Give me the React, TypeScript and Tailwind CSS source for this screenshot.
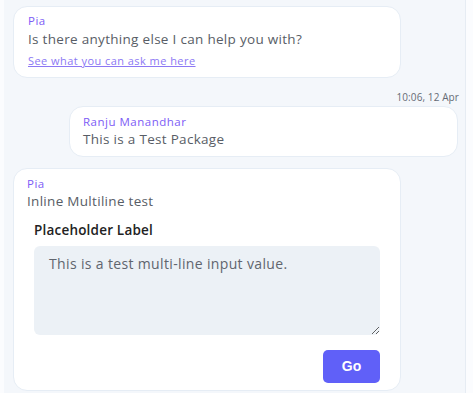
export default function App() {
  const font = { fontFamily: '"Open Sans", "Noto Sans", sans-serif' };
  return (
    <div className="w-[473px] h-[393px] bg-[#fbfcfe] overflow-hidden" style={font}>
      <div className="ml-[4px] w-[462px] h-full bg-[#f4f7fb] border-r border-[#e6ecf3] pl-[9px] pt-[6px] flex flex-col">
        <div className="w-[388px] h-[72px] bg-white border border-[#e6edf5] rounded-[14px] pl-[14px] pt-[7px]">
          <div className="text-[11.5px] leading-[14px] tracking-[0.5px] text-[#7d5cf6]">Pia</div>
          <div className="text-[13.5px] leading-[18px] tracking-[0.3px] text-[#585d66] mt-[2px]">
            Is there anything else I can help you with?
          </div>
          <a className="block mt-[6px] text-[11px] leading-[14px] tracking-[0.45px] text-[#8c78f4] underline">
            See what you can ask me here
          </a>
        </div>

        <div className="w-[449px] text-right text-[10px] leading-[12px] tracking-[0.1px] text-[#666b75] mt-[13px] pr-[3px]">
          10:06, 12 Apr
        </div>

        <div className="ml-[56px] w-[389px] h-[51px] bg-white border border-[#e6edf5] rounded-[14px] pl-[13px] pt-[8px] mt-[3px]">
          <div className="text-[11.5px] leading-[14px] tracking-[0.5px] text-[#7d5cf6]">Ranju Manandhar</div>
          <div className="text-[13.5px] leading-[18px] tracking-[0.3px] text-[#585d66] mt-[1px]">This is a Test Package</div>
        </div>

        <div className="w-[388px] h-[223px] bg-white border border-[#e6edf5] rounded-[14px] pl-[13px] pt-[8px] mt-[11px]">
          <div className="text-[11.5px] leading-[14px] tracking-[0.5px] text-[#7d5cf6]">Pia</div>
          <div className="text-[13.5px] leading-[18px] tracking-[0.3px] text-[#585d66] mt-[1px]">Inline Multiline test</div>
          <div className="ml-[7px] mt-[11px] w-[346px]">
            <div className="text-[13.5px] leading-[18px] tracking-[0.2px] font-semibold text-[#222]">Placeholder Label</div>
            <textarea
              className="block mt-[7px] w-[346px] h-[89px] bg-[#ecf1f6] rounded-[6px] px-[15px] pt-[9px] text-[14px] leading-[18px] tracking-[0.35px] text-[#60656e] outline-none"
              style={font}
              defaultValue="This is a test multi-line input value."
            />
            <div className="flex justify-end mt-[15px]">
              <button
                className="w-[57px] h-[33px] rounded-[5px] bg-[#6060f8] text-white text-[14px] font-bold"
                style={{ fontFamily: '"Liberation Sans", Arial, sans-serif' }}
              >
                Go
              </button>
            </div>
          </div>
        </div>
      </div>
    </div>
  );
}
